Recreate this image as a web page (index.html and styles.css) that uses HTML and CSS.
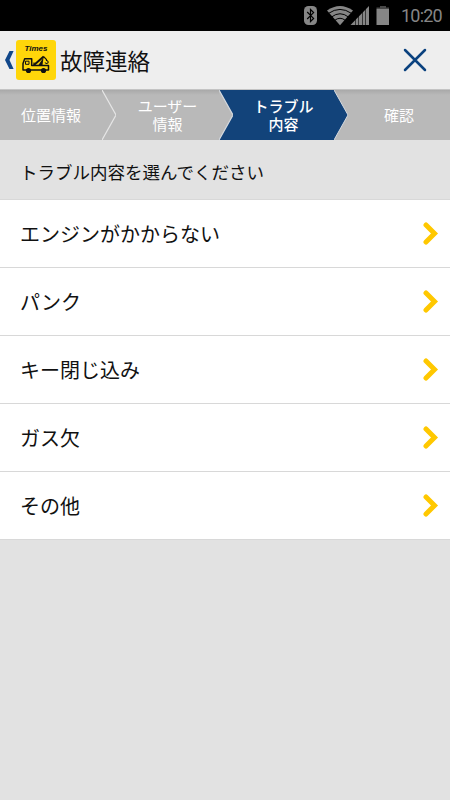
FILE: index.html
```html
<!DOCTYPE html>
<html lang="ja">
<head>
  <meta charset="UTF-8">
  <meta name="viewport" content="width=device-width, initial-scale=1.0">
  <title>故障連絡</title>
  <link rel="stylesheet" href="styles.css">
</head>
<body>
  <div class="status-bar">
    <svg class="status-icons" width="86" height="22" viewBox="0 0 86 22">
      <!-- bluetooth -->
      <rect x="0" y="1" width="13" height="19" rx="4.5" fill="#868686"/>
      <path d="M3.2 7l6.4 6.4L6.5 16.5v-12l3.1 3.1L3.2 14" fill="none" stroke="#000" stroke-width="1.2"/>
      <!-- wifi -->
      <path d="M23 5.5Q36 -3.5 49 5.5L36 20.3z" fill="#868686"/>
      <path d="M24.5 8.4Q36 .4 47.5 8.4M27.5 12Q36 5.5 44.5 12M30.5 15.5Q36 11 41.5 15.5" fill="none" stroke="#000" stroke-width="1"/>
      <!-- signal -->
      <path d="M46.5 20L65 1V20z" fill="#868686"/>
      <path d="M51.5 10v10M54.5 8v12M58.5 4v16M61.5 2v18" fill="none" stroke="#000" stroke-width=".6"/>
      <!-- battery -->
      <path d="M72.5 4H85v16H72.5z" fill="#868686"/>
      <path d="M76 1h6v1.5h3V4H72.5V2.5H76z" fill="#484848"/>
    </svg>
    <span class="time">10:20</span>
  </div>

  <div class="header">
    <svg class="back" width="9" height="18" viewBox="0 0 9 18">
      <path d="M4.5 0H8.6L4.5 9l4.1 9H4.5L0 9z" fill="#11478a"/>
    </svg>
    <div class="logo">
      <span class="logo-name">Times</span>
      <svg class="logo-truck" width="28" height="19" viewBox="0 0 28 19">
        <path d="M1 15V8.5L2.700 3.700H9.700V10.500H26.500V15z" fill="#ffd60a" stroke="#111" stroke-width="1.500" stroke-linejoin="round"/>
        <path d="M3.500 9.300V6.200H7v3.100z" fill="none" stroke="#111" stroke-width="1"/>
        <path d="M12 10L21.700 1.500" stroke="#111" stroke-width="2"/>
        <path d="M16.500 10L21.500 2.500 20.500 10z" fill="#111"/>
        <path d="M21.500 1.500L24.500 4.500V5.500Q26.800 6.200 25.900 7.900Q24.300 9.300 22.900 7.500" fill="none" stroke="#111" stroke-width="1.100"/>
        <path d="M12 7.500v3" stroke="#111" stroke-width="1.200"/>
        <circle cx="6.500" cy="15.500" r="2.600" fill="#111"/>
        <circle cx="21.500" cy="15.500" r="2.600" fill="#111"/>
      </svg>
    </div>
    <h1 class="title">故障連絡</h1>
    <svg class="close" width="24" height="24" viewBox="0 0 24 24">
      <path d="M2 2L22 22M22 2L2 22" stroke="#0b427f" stroke-width="2.5" stroke-linecap="round"/>
    </svg>
  </div>

  <div class="steps">
    <div class="step step-first">位置情報</div>
    <svg class="arrow" width="14" height="50" viewBox="0 0 14 50">
      <path d="M0 0L14 25 0 50" fill="none" stroke="#e6e6e6" stroke-width="1.2"/>
    </svg>
    <div class="step step-user">ユーザー<br>情報</div>
    <svg class="arrow arrow-active" width="14" height="50" viewBox="0 0 14 50">
      <path d="M0 0L14 25 0 50z" fill="#b9b9b9"/>
      <path d="M0 0L14 25 0 50" fill="none" stroke="#d5d9de" stroke-width="1.2"/>
    </svg>
    <div class="step step-active">トラブル<br>内容</div>
    <svg class="arrow" width="14" height="50" viewBox="0 0 14 50">
      <path d="M0 0L14 25 0 50z" fill="#12437a"/>
      <path d="M0 0L14 25 0 50" fill="none" stroke="#d5d9de" stroke-width="1"/>
    </svg>
    <div class="step step-last">確認</div>
  </div>

  <div class="lead">トラブル内容を選んでください</div>

  <ul class="list">
    <li class="item">エンジンがかからない
      <svg class="chevron" width="16" height="24" viewBox="0 0 16 24"><path d="M3 3l8.5 8.5L3 20"/></svg>
    </li>
    <li class="item">パンク
      <svg class="chevron" width="16" height="24" viewBox="0 0 16 24"><path d="M3 3l8.5 8.5L3 20"/></svg>
    </li>
    <li class="item">キー閉じ込み
      <svg class="chevron" width="16" height="24" viewBox="0 0 16 24"><path d="M3 3l8.5 8.5L3 20"/></svg>
    </li>
    <li class="item">ガス欠
      <svg class="chevron" width="16" height="24" viewBox="0 0 16 24"><path d="M3 3l8.5 8.5L3 20"/></svg>
    </li>
    <li class="item">その他
      <svg class="chevron" width="16" height="24" viewBox="0 0 16 24"><path d="M3 3l8.5 8.5L3 20"/></svg>
    </li>
  </ul>
</body>
</html>
```

FILE: styles.css
```css
* {
  margin: 0;
  padding: 0;
  box-sizing: border-box;
}

body {
  min-height: 800px;
  background-color: #e2e2e2;
  color: #111;
  font-family: "Noto Sans CJK JP", sans-serif;
}

.status-bar {
  display: flex;
  justify-content: flex-end;
  height: 31px;
  padding: 5px 8px 0 0;
  background-color: #000;
}

.time {
  width: 41px;
  margin-left: 11px;
  color: #868686;
  font-family: Roboto, sans-serif;
  font-size: 18px;
  letter-spacing: -0.8px;
  line-height: 21px;
  white-space: nowrap;
}

.header {
  display: flex;
  align-items: center;
  height: 59px;
  padding: 0 23px 0 5px;
  background-color: #eee;
  border-bottom: 1px solid #c4c4c4;
}

.logo {
  display: flex;
  flex-direction: column;
  align-items: center;
  width: 40px;
  height: 40px;
  margin-left: 2px;
  padding-top: 4px;
  border-radius: 3px;
  background-color: #ffd60a;
}

.logo-name {
  font-family: "Liberation Sans", sans-serif;
  font-size: 8px;
  font-weight: bold;
  font-style: italic;
  line-height: 10px;
}

.logo-truck {
  margin-top: 1px;
}

.title {
  margin-left: 4px;
  font-size: 22.5px;
  font-weight: normal;
  line-height: 30px;
}

.close {
  margin-left: auto;
}

.steps {
  display: flex;
  height: 50px;
  background: linear-gradient(#a9a9a9, #b9b9b9 5px);
  color: #fff;
  font-size: 15px;
  line-height: 18px;
  text-align: center;
}

.step {
  display: flex;
  align-items: center;
  justify-content: center;
}

.step-first,
.step-last {
  width: 102px;
}

.step-user {
  width: 103px;
}

.step-active {
  width: 101px;
  font-weight: 500;
}

.step-active,
.arrow-active {
  background-color: #12437a;
}

.lead {
  height: 60px;
  padding-left: 20px;
  border-bottom: 1px solid #d8d8d8;
  font-size: 17.5px;
  line-height: 63px;
}

.list {
  list-style: none;
}

.item {
  display: flex;
  align-items: center;
  justify-content: space-between;
  height: 68px;
  padding: 0 11px 0 20px;
  border-bottom: 1px solid #d8d8d8;
  background-color: #fff;
  font-size: 20px;
}

.chevron {
  fill: none;
  stroke: #ffc800;
  stroke-width: 5;
  stroke-linecap: round;
}
```
